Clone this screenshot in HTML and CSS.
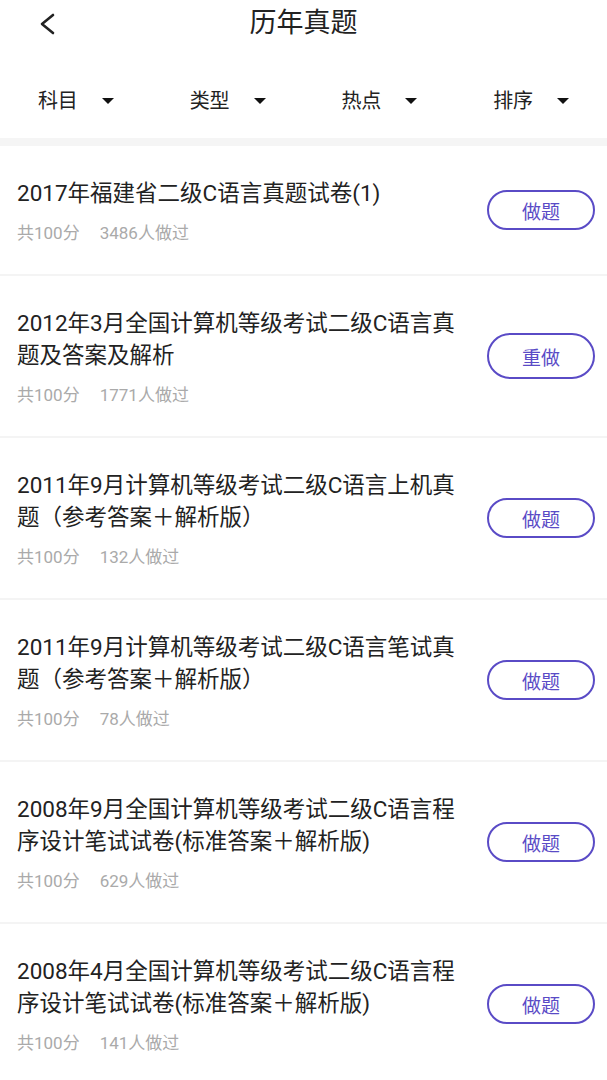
FILE: index.html
```html
<!DOCTYPE html>
<html lang="zh-CN">
<head>
    <meta charset="UTF-8">
    <title>历年真题</title>
    <link rel="stylesheet" href="styles.css">
</head>
<body>
    <div class="page">
        <div class="topbar">
            <div class="back">
                <svg width="18" height="22" viewBox="0 0 18 22"><path d="M15 2 L4 11 L15 20" fill="none" stroke="#222" stroke-width="2.6" stroke-linecap="round" stroke-linejoin="round"/></svg>
            </div>
            <h1>历年真题</h1>
            <div></div>
        </div>

        <div class="filters">
            <div class="filter">科目<span class="caret"></span></div>
            <div class="filter">类型<span class="caret"></span></div>
            <div class="filter">热点<span class="caret"></span></div>
            <div class="filter">排序<span class="caret"></span></div>
        </div>

        <div class="band"></div>

        <ul class="list">
            <li class="item">
                <div class="info">
                    <p class="title">2017年福建省二级C语言真题试卷(1)</p>
                    <p class="meta"><span>共100分</span><span>3486人做过</span></p>
                </div>
                <button class="btn">做题</button>
            </li>
            <li class="item">
                <div class="info">
                    <p class="title">2012年3月全国计算机等级考试二级C语言真题及答案及解析</p>
                    <p class="meta"><span>共100分</span><span>1771人做过</span></p>
                </div>
                <button class="btn btn-tall">重做</button>
            </li>
            <li class="item">
                <div class="info">
                    <p class="title">2011年9月计算机等级考试二级C语言上机真题（参考答案＋解析版）</p>
                    <p class="meta"><span>共100分</span><span>132人做过</span></p>
                </div>
                <button class="btn">做题</button>
            </li>
            <li class="item">
                <div class="info">
                    <p class="title">2011年9月计算机等级考试二级C语言笔试真题（参考答案＋解析版）</p>
                    <p class="meta"><span>共100分</span><span>78人做过</span></p>
                </div>
                <button class="btn">做题</button>
            </li>
            <li class="item">
                <div class="info">
                    <p class="title">2008年9月全国计算机等级考试二级C语言程序设计笔试试卷(标准答案＋解析版)</p>
                    <p class="meta"><span>共100分</span><span>629人做过</span></p>
                </div>
                <button class="btn">做题</button>
            </li>
            <li class="item">
                <div class="info">
                    <p class="title">2008年4月全国计算机等级考试二级C语言程序设计笔试试卷(标准答案＋解析版)</p>
                    <p class="meta"><span>共100分</span><span>141人做过</span></p>
                </div>
                <button class="btn">做题</button>
            </li>
        </ul>
    </div>
</body>
</html>
```

FILE: styles.css
```css
body {margin: 0; background: #fff; font-family: Roboto, "Noto Sans CJK SC", sans-serif; color: #222;}
.page {width: 607px; overflow: hidden;}

.topbar {height: 46px; display: grid; grid-template-columns: 1fr auto 1fr; align-items: center;}
.back {padding-left: 38px; display: flex; align-items: center; padding-top: 2px;}
.topbar h1 {margin: 0; font-size: 27px; font-weight: 400; color: #222; line-height: 46px;}

.filters {display: grid; grid-template-columns: repeat(4, 1fr); padding: 41px 0 23px;}
.filter {display: flex; align-items: center; justify-content: center; font-size: 20px; line-height: 28px; color: #222;}
.caret {width: 0; height: 0; margin-left: 24px; border-left: 6px solid transparent; border-right: 6px solid transparent; border-top: 6px solid #111;}

.band {height: 8px; background: #f5f5f5;}

.list {list-style: none; margin: 0; padding: 0;}
.item {display: flex; align-items: center; padding: 31px 12px 31px 17px; border-bottom: 2px solid #f4f4f4;}
.info {flex: 1; min-width: 0; margin-right: 20px;}
.title {margin: 0; font-size: 22.5px; line-height: 32px; color: #222;}
.meta {margin: 14px 0 0; font-size: 17px; line-height: 20px; color: #aaa; display: flex; gap: 20px;}

.btn {flex: none; width: 108px; height: 40px; border: 2px solid #5a4bc6; border-radius: 23px; background: #fff; color: #5a4bc6; font-family: inherit; font-size: 19px; padding: 0;}
.btn-tall {height: 46px;}
```
